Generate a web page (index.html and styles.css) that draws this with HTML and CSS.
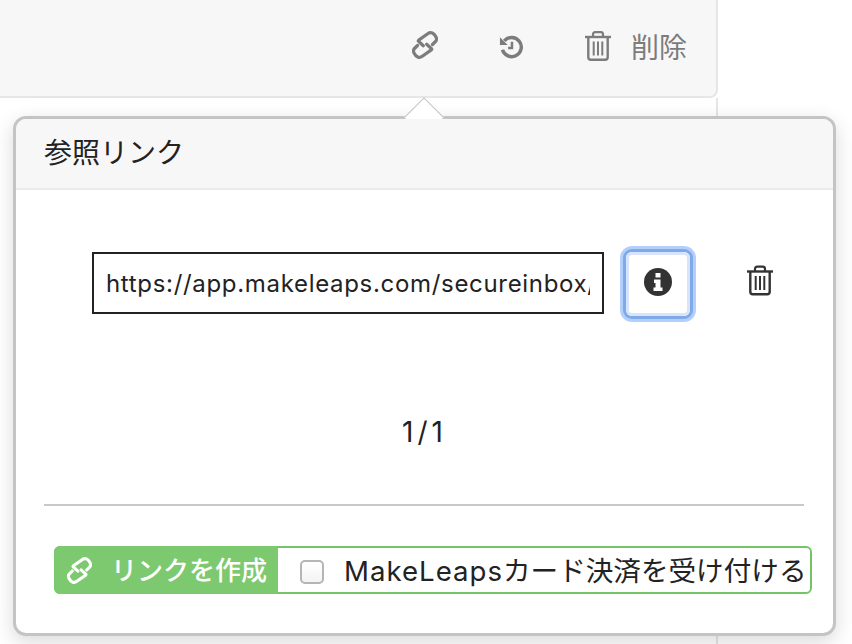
FILE: index.html
```html
<!DOCTYPE html>
<html lang="ja">
<head>
<meta charset="utf-8">
<title>参照リンク</title>
<link rel="stylesheet" href="styles.css">
</head>
<body>
<div class="page">
  <div class="toolbar">
    <button class="tool tool-link" type="button" aria-label="link">
      <svg class="ico-link" viewBox="-1 0 26 28"><g fill="none" stroke="currentColor" stroke-width="3.200" stroke-linecap="round" stroke-linejoin="round"><path d="M10.300 14.700 5.500 10.300Q5 9.700 5.700 9.100L14.700 2.700Q17 1 19.300 2Q21.500 3 23 6Q24 8 23 10L19.500 13.500"/><path d="M13.700 13.300 18.500 17.700Q19 18.300 18.300 18.900L9.300 25.300Q7 27 4.700 26Q2.500 25 1 22Q0 20 1 18L4.500 14.500"/></g></svg>
    </button>
    <button class="tool tool-history" type="button" aria-label="history">
      <svg class="ico-history" viewBox="0 0 26 26"><g fill="none" stroke="currentColor"><path d="M5.500 7.200A10 10 0 1 1 3.600 16.500" stroke-width="3.600"/><path d="M13.500 8v6.500H9.500" stroke-width="2.600"/></g><path d="M1 3.500 1 11.500 9 11.500Z" fill="currentColor"/></svg>
    </button>
    <button class="tool tool-delete" type="button">
      <svg class="ico-trash" viewBox="0 0 26 30"><g fill="none" stroke="currentColor"><path d="M0 6h26" stroke-width="2.400"/><path d="M8 6V3.500Q8 1.200 10.300 1.200h5.400Q18 1.200 18 3.500V6" stroke-width="2.200"/><path d="M3.300 6v20.300q0 2.500 2.500 2.500h14.400q2.500 0 2.500-2.500V6" stroke-width="2.400"/><path d="M8.700 10.500v14M13 10.500v14M17.300 10.500v14" stroke-width="2"/></g></svg>
      <span>削除</span>
    </button>
  </div>
  <div class="rest"></div>
  <section class="popover">
    <span class="arrow"></span>
    <header class="pop-head">参照リンク</header>
    <div class="pop-body">
      <div class="link-row">
        <input class="url" type="text" value="https://app.makeleaps.com/secureinbox/abcdef" readonly>
        <button class="info" type="button" aria-label="info">
          <svg viewBox="0 0 28 28"><circle cx="14" cy="14" r="14" fill="currentColor"/><path d="M11.500 5h5v4.500h-5zM10 11.500h6.500v8H18.500v3.500H9.500v-3.500h2V15H10z" fill="#fff"/></svg>
        </button>
        <button class="remove" type="button" aria-label="remove">
          <svg viewBox="0 0 26 30"><g fill="none" stroke="currentColor"><path d="M0 6h26" stroke-width="2.400"/><path d="M8 6V3.500Q8 1.200 10.300 1.200h5.400Q18 1.200 18 3.500V6" stroke-width="2.200"/><path d="M3.300 6v20.300q0 2.500 2.500 2.500h14.400q2.500 0 2.500-2.500V6" stroke-width="2.400"/><path d="M8.700 10.500v14M13 10.500v14M17.300 10.500v14" stroke-width="2"/></g></svg>
        </button>
      </div>
      <div class="pager">1/1</div>
      <hr class="rule">
      <div class="actions">
        <button class="create" type="button">
          <svg viewBox="-1 0 26 28"><g fill="none" stroke="currentColor" stroke-width="3.200" stroke-linecap="round" stroke-linejoin="round"><path d="M10.300 14.700 5.500 10.300Q5 9.700 5.700 9.100L14.700 2.700Q17 1 19.300 2Q21.500 3 23 6Q24 8 23 10L19.500 13.500"/><path d="M13.700 13.300 18.500 17.700Q19 18.300 18.300 18.900L9.300 25.300Q7 27 4.700 26Q2.500 25 1 22Q0 20 1 18L4.500 14.500"/></g></svg>
          <span>リンクを作成</span>
        </button>
        <label class="card-opt">
          <span class="check"></span>
          <span class="card-text"><span class="latin">MakeLeaps</span>カード決済を受け付ける</span>
        </label>
      </div>
    </div>
  </section>
</div>
</body>
</html>
```
FILE: styles.css
```css
* { box-sizing: border-box; }
html, body { margin: 0; padding: 0; background: #fff; }
body {
  width: 852px;
  height: 644px;
  overflow: hidden;
  font-family: Inter, "Noto Sans CJK JP", sans-serif;
  color: #222;
}
button { font: inherit; background: none; border: 0; padding: 0; }
.page { position: relative; width: 852px; height: 644px; display: flex; flex-direction: column; }
.toolbar {
  width: 718px;
  height: 98px;
  background: #f7f7f7;
  border: 2px solid #e6e6e6;
  border-width: 0 2px 2px 0;
  border-bottom-right-radius: 8px;
  display: flex;
  align-items: flex-start;
  color: #7c7c7c;
  padding-top: 28px;
  padding-left: 412px;
}
.tool { display: flex; align-items: center; color: #7c7c7c; }
.tool-link { margin-top: 3px; }
.ico-link { width: 26px; height: 28px; display: block; }
.tool-history { margin-left: 61px; margin-top: 6px; }
.ico-history { width: 25px; height: 25px; display: block; }
.tool-delete { margin-left: 61px; font-size: 28px; }
.tool-delete span { margin-left: 20px; line-height: 32px; margin-top: 4px; }
.ico-trash { width: 26px; height: 30px; display: block; }
.rest { flex: 1; width: 718px; border-right: 2px solid #e6e6e6; }

.popover {
  position: absolute;
  left: 13px;
  top: 116px;
  width: 823px;
  height: 520px;
  background: #fff;
  border: 3px solid #c4c4c4;
  border-radius: 13px;
  box-shadow: 0 6px 20px rgba(0, 0, 0, 0.15);
}
.arrow {
  position: absolute;
  left: 394px;
  top: -16px;
  width: 28px;
  height: 28px;
  background: #fff;
  border: 1px solid #c4c4c4;
  border-width: 1px 0 0 1px;
  transform: rotate(45deg);
}
.pop-head {
  position: relative;
  height: 71px;
  background: #f7f7f7;
  border-bottom: 2px solid #ebebeb;
  border-radius: 10px 10px 0 0;
  padding-left: 28px;
  font-size: 28px;
  line-height: 69px;
  color: #222;
}
.pop-body { padding: 0 28px; display: flex; flex-direction: column; }
.link-row { display: flex; align-items: flex-start; padding-top: 62px; padding-left: 48px; height: 212px; }
.url {
  width: 512px;
  height: 62px;
  border: 2px solid #222;
  border-radius: 0;
  padding: 0 12px;
  font: 24px Inter, sans-serif;
  letter-spacing: 0.68px;
  color: #222;
  background: #fff;
  outline: none;
}
.info {
  margin-left: 22px;
  width: 64px;
  height: 64px;
  border-radius: 6px;
  background: #fff;
  border: 0;
  box-shadow: 0 0 0 3px #7fa9e8, 0 0 0 6px #b3cffb, inset 0 0 0 3px #d6e5fb;
  display: flex;
  align-items: center;
  justify-content: center;
  color: #333;
}
.info svg { width: 28px; height: 28px; display: block; margin-top: -4px; }
.remove { margin-left: 57px; margin-top: 13px; color: #333; }
.remove svg { width: 26px; height: 31px; display: block; }
.pager { text-align: center; font-size: 28px; letter-spacing: 4px; line-height: 32px; height: 32px; margin-top: 14px; color: #222; }
.rule { margin: 56px 0 0; width: 760px; border: 0; border-top: 2px solid #c9c9c9; height: 0; }
.actions {
  margin-top: 40px;
  margin-left: 10px;
  width: 758px;
  height: 48px;
  display: flex;
  border: 2px solid #74c568;
  border-radius: 6px;
}
.create {
  width: 224px;
  margin: -2px 0 -2px -2px;
  background: #7dc970;
  color: #fff;
  font-size: 26px;
  border-radius: 6px 0 0 6px;
  display: flex;
  align-items: center;
  padding-left: 13px;
}
.create svg { width: 25px; height: 27px; display: block; }
.create span { margin-left: 19px; font-weight: 500; margin-top: -4px; }
.card-opt { display: flex; align-items: center; padding-left: 22px; font-size: 27.6px; white-space: nowrap; color: #222; }
.card-text { margin-top: -3px; }
.latin { letter-spacing: 1px; }
.check {
  width: 24px;
  height: 24px;
  margin: 4px 20px 0 0;
  border: 2px solid #b5b5b5;
  border-radius: 5px;
  background: linear-gradient(#fff, #f4f4f4);
}
```
